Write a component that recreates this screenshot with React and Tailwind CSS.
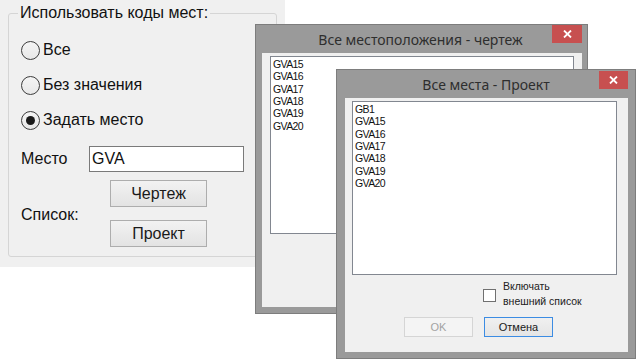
import { useState } from "react";

const places1 = ["GVA15", "GVA16", "GVA17", "GVA18", "GVA19", "GVA20"];
const places2 = ["GB1", "GVA15", "GVA16", "GVA17", "GVA18", "GVA19", "GVA20"];

const Radio = ({ checked, label, onClick }) => (
  <button type="button" onClick={onClick} className="flex items-center h-[20px] gap-[3px] text-left">
    <span className="w-[19px] h-[19px] rounded-full border border-[#3c3c3c] bg-gradient-to-b from-[#f4f4f4] to-[#e8e8e8] flex items-center justify-center">
      {checked && <span className="w-[9px] h-[9px] rounded-full bg-[#1a1a1a]" />}
    </span>
    <span>{label}</span>
  </button>
);

const WinButton = ({ children }) => (
  <button
    type="button"
    className="w-[97px] h-[27px] border border-[#adadad] bg-gradient-to-b from-[#f2f2f2] to-[#e3e3e3] text-[16px] text-[#1a1a1a]"
  >
    {children}
  </button>
);

const CloseButton = ({ className }) => (
  <div className={`absolute bg-[#c75050] flex items-center justify-center ${className}`}>
    <svg width="9" height="8" viewBox="0 0 9 8">
      <path d="M1 0.5 L8 7.5 M8 0.5 L1 7.5" stroke="#fff" strokeWidth="1.8" />
    </svg>
  </div>
);

const ListBox = ({ items, className }) => (
  <div className={`bg-white border border-[#828790] pl-[2px] pt-[1px] text-[10.5px] leading-[12.35px] tracking-[-0.6px] text-[#111] ${className}`}>
    {items.map((it) => (
      <div key={it}>{it}</div>
    ))}
  </div>
);

export default function App() {
  const [mode, setMode] = useState("set");
  const [place, setPlace] = useState("GVA");
  const [external, setExternal] = useState(false);

  return (
    <div className="relative w-[636px] h-[360px] bg-white overflow-hidden" style={{ fontFamily: '"Liberation Sans", Arial, sans-serif' }}>
      {/* main options panel */}
      <div className="absolute left-0 top-0 w-[285px] h-[267px] bg-[#f0f0f0] pt-[4px] px-[8px] text-[16px] text-[#111]">
        <fieldset className="h-[253px] border border-[#d5d5d5] rounded-[3px] pl-[12px]">
          <legend className="-ml-[3px] px-[2px] leading-[18px]">Использовать коды мест:</legend>
          <div className="flex flex-col gap-[15px] mt-[18px]">
            <Radio label="Все" checked={mode === "all"} onClick={() => setMode("all")} />
            <Radio label="Без значения" checked={mode === "none"} onClick={() => setMode("none")} />
            <Radio label="Задать место" checked={mode === "set"} onClick={() => setMode("set")} />
          </div>
          <div className="flex items-center mt-[16px]">
            <span className="w-[68px]">Место</span>
            <input
              value={place}
              onChange={(e) => setPlace(e.target.value)}
              className="w-[155px] h-[26px] border border-[#7a7a7a] bg-white px-[2px] text-[16px] outline-none"
            />
          </div>
          <div className="flex items-center mt-[8px]">
            <span className="w-[89px] pt-[2px]">Список:</span>
            <div className="flex flex-col gap-[13px]">
              <WinButton>Чертеж</WinButton>
              <WinButton>Проект</WinButton>
            </div>
          </div>
        </fieldset>
      </div>

      {/* dialog: drawing locations */}
      <div className="absolute left-[255px] top-[24px] w-[333px] h-[290px] bg-[#9a9a9a] border border-[#7d7d7d] flex flex-col">
        <div className="relative h-[28px] shrink-0 flex items-center justify-center pr-[2px] text-[14px] text-[#2e2e2e]" style={{ fontFamily: '"Noto Sans", sans-serif' }}>
          Все местоположения - чертеж
          <CloseButton className="left-[296px] top-0 w-[30px] h-[18px]" />
        </div>
        <div className="flex-1 ml-[6px] mr-[5px] mb-[6px] bg-[#f0f0f0] px-[8px] pt-[3px]">
          <ListBox items={places1} className="w-[304px] h-[178px]" />
        </div>
      </div>

      {/* dialog: project locations */}
      <div className="absolute left-[336px] top-[69px] w-[300px] h-[290px] bg-[#9a9a9a] border border-[#7d7d7d] flex flex-col">
        <div className="relative h-[28px] shrink-0 flex items-center justify-center text-[14px] text-[#2e2e2e]" style={{ fontFamily: '"Noto Sans", sans-serif' }}>
          Все места - Проект
          <CloseButton className="left-[262px] top-[1px] w-[29px] h-[18px]" />
        </div>
        <div className="flex-1 ml-[8px] mr-[7px] mb-[6px] bg-[#f0f0f0] pl-[7px] pt-[3px] flex flex-col">
          <ListBox items={places2} className="w-[265px] h-[174px]" />
          <div className="flex items-center mt-[8px] ml-[131px] text-[10.5px] leading-[14.5px] text-[#222]">
            <button
              type="button"
              onClick={() => setExternal(!external)}
              className="w-[13px] h-[13px] border border-[#707070] bg-white mr-[7px] flex items-center justify-center text-[10px]"
            >
              {external ? "✓" : ""}
            </button>
            <span className="-mt-[4px]">Включать<br />внешний список</span>
          </div>
          <div className="flex gap-[11px] mt-[9px] ml-[52px] text-[11px]">
            <button type="button" disabled className="w-[69px] h-[20px] border border-[#d5d5d5] bg-[#f4f4f4] text-[#a3a3a3]">
              OK
            </button>
            <button type="button" className="w-[69px] h-[20px] border border-[#3c8ce3] bg-gradient-to-b from-[#f0f0f0] to-[#e5e5e5] text-[#1a1a1a]">
              Отмена
            </button>
          </div>
        </div>
      </div>
    </div>
  );
}
